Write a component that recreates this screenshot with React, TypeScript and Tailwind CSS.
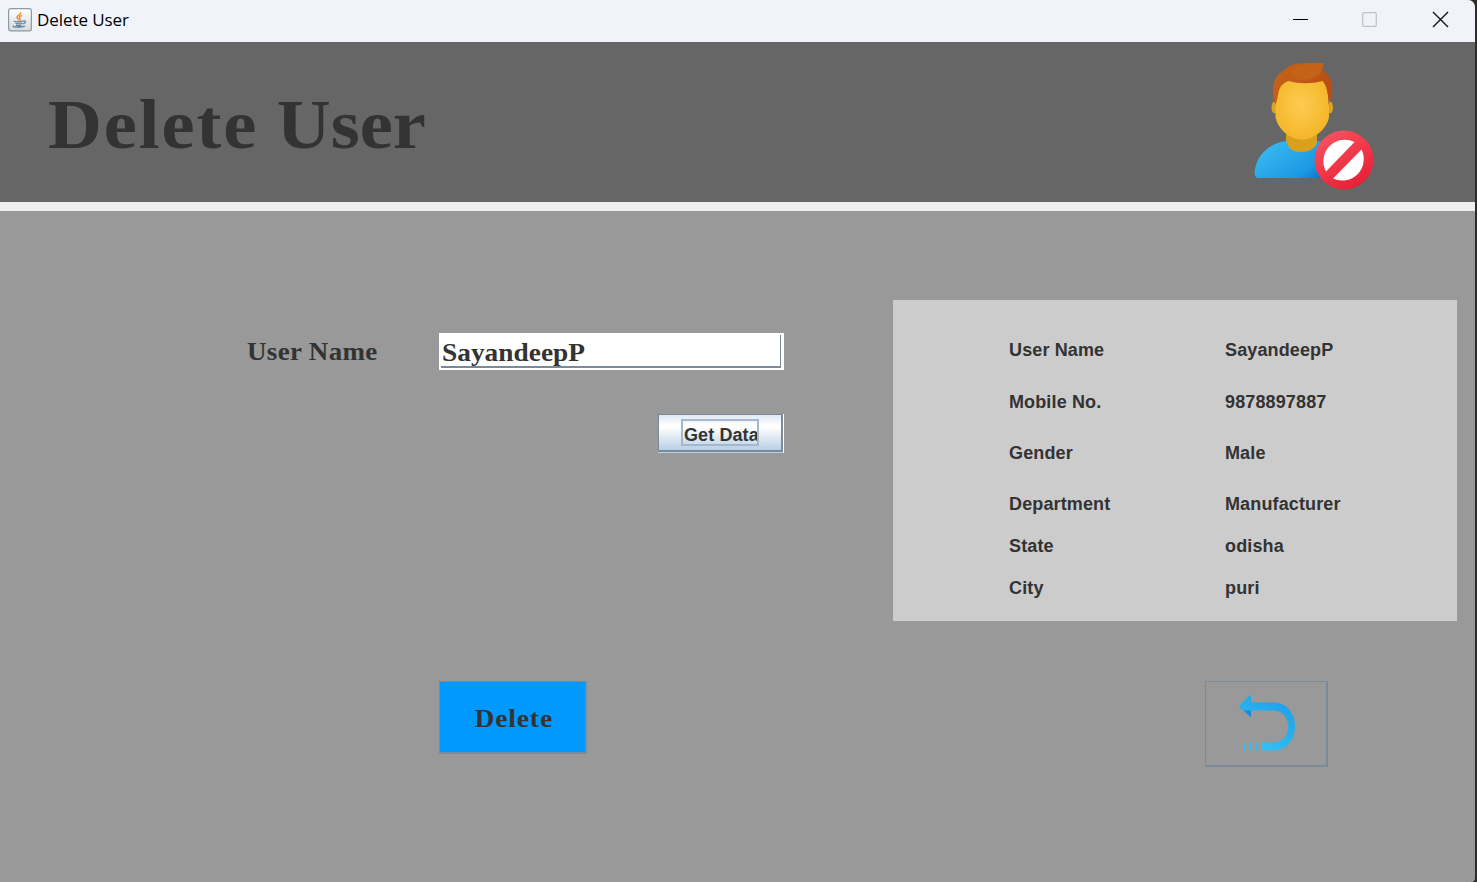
import React from "react";

const rows = [
  { label: "User Name", value: "SayandeepP", height: "h-[52px]" },
  { label: "Mobile No.", value: "9878897887", height: "h-[51px]" },
  { label: "Gender", value: "Male", height: "h-[51px]" },
  { label: "Department", value: "Manufacturer", height: "h-[42px]" },
  { label: "State", value: "odisha", height: "h-[42px]" },
  { label: "City", value: "puri", height: "h-[22px]" },
];

function JavaIcon() {
  return (
    <svg width="24" height="24" viewBox="0 0 24 24" fill="none">
      <defs>
        <linearGradient id="javaBg" x1="0" y1="0" x2="0" y2="1">
          <stop offset="0" stopColor="#ffffff" />
          <stop offset="1" stopColor="#d5dadd" />
        </linearGradient>
      </defs>
      <rect x="0.6" y="0.6" width="22.8" height="22.2" rx="2" fill="url(#javaBg)" stroke="#8a9aa6" strokeWidth="1.2" />
      <path d="M12.500 4c1 3-4 3.500-3.500 5.500.2 1 1.500 1.500 1.600 3M14 7.500c-3 1-3.200 2-2 3.200.6.8 0 1.500-.6 2" stroke="#f08a2c" strokeWidth="1.400" />
      <path d="M6.500 13c-2 .8 6 1.300 9 0M7.500 15.200c1 1 5 1 7 0M8 17c1.500.9 4 .8 5.500 0M15.500 13c3-.8 2.500 2.300-.5 3M6 17.700c-4 1.500 7 2.300 11 .3" stroke="#557f9d" strokeWidth="1.200" />
    </svg>
  );
}

function BlockedUser() {
  return (
    <svg width="150" height="150" viewBox="0 0 150 150">
      <defs>
        <radialGradient id="face" cx="0.48" cy="0.45" r="0.6">
          <stop offset="0" stopColor="#fecb51" />
          <stop offset="1" stopColor="#f3b526" />
        </radialGradient>
        <linearGradient id="shirt" x1="0" y1="0.2" x2="1" y2="0.9">
          <stop offset="0" stopColor="#3abcf0" />
          <stop offset="0.75" stopColor="#1b98e3" />
          <stop offset="1" stopColor="#0b73c4" />
        </linearGradient>
        <linearGradient id="hair" x1="0" y1="0" x2="1" y2="0.4">
          <stop offset="0" stopColor="#c8651a" />
          <stop offset="1" stopColor="#b94e14" />
        </linearGradient>
        <linearGradient id="ban" x1="0.2" y1="0" x2="0.8" y2="1">
          <stop offset="0" stopColor="#f85361" />
          <stop offset="1" stopColor="#e71c32" />
        </linearGradient>
      </defs>
      <path d="M19 128q-4.500 0-4.500-5c1-17 14.500-30 31.500-32h32c6 1 10 4 10 10v27z" fill="url(#shirt)" />
      <path d="M46 80h31v11c0 14-29 14-29 3l-2-3z" fill="#d8a01c" />
      <ellipse cx="34.500" cy="57.500" rx="3" ry="6" fill="#dca323" />
      <ellipse cx="90" cy="57.500" rx="3" ry="6" fill="#dca323" />
      <path d="M35.500 50 38 33C46 24 79 24 86 33l3 17v17C87 79 74 89.500 62 89.500S37.500 79 35.500 67z" fill="url(#face)" />
      <path d="M35.500 55C31 42 32 28 42 22c6-6 12-9 22-9h19.500l-1 8c8 3 11 14 9.500 23l-3.500 11c0-11-2-20-6-24-11 3-23 3-34 0-9 3-10 10-11 17z" fill="url(#hair)" />
      <path d="M49 21c6-5 14-8 24-8h10c1 12-10 17-20 17-7 0-12-4-14-9z" fill="#c46217" />
      <circle cx="104" cy="110" r="29.500" fill="url(#ban)" />
      <path d="M114.500 92A21.500 21.500 0 0 0 86 121.500Z" fill="#fff" />
      <path d="M121.500 99.500A21.500 21.500 0 0 1 93 128.500Z" fill="#fff" />
    </svg>
  );
}

function BackArrow() {
  return (
    <svg width="57" height="56" viewBox="0 0 57 56">
      <defs>
        <linearGradient id="arrow" x1="0.8" y1="0.2" x2="0.3" y2="1">
          <stop offset="0" stopColor="#20a3e8" />
          <stop offset="1" stopColor="#36c2f3" />
        </linearGradient>
      </defs>
      <path d="M0 11 4 15l8 7.500V13z" fill="#168ddb" />
      <path d="M0 11 10 0.500h2V7.500H35C63 8 63 55 35 55.500H22V47.500H35C54 46 54 17 35 15.500H4z" fill="url(#arrow)" />
      <path d="M4 48.500h3v6.500H4zM10 47.500h3v8h-3zM16 47.500h3v8h-3z" fill="#32bcf1" />
    </svg>
  );
}

export default function App() {
  return (
    <div className="h-[882px] w-[1477px] overflow-hidden bg-[#2c2c2c] pr-[2px] font-['Liberation_Sans',sans-serif] text-[#333333]">
      <div className="flex h-full flex-col overflow-hidden rounded-tr-[7px] rounded-br-[4px] bg-[#999999]">
        <div className="flex h-[42px] shrink-0 items-start justify-between bg-[#f0f3fa] pl-2">
          <div className="flex items-center gap-[5px] pt-[7px]">
            <JavaIcon />
            <span className="pt-px font-['Open_Sans',sans-serif] text-[17px] leading-6 tracking-[-0.07px] text-black">Delete User</span>
          </div>
          <svg width="184" height="40" viewBox="0 0 184 40" fill="none">
            <path d="M2 19.500h15" stroke="#000" />
            <rect x="71.700" y="12.700" width="13.600" height="13.600" rx="1" stroke="#c1c3c8" strokeWidth="1.300" />
            <path d="m142 12 15 15m0-15-15 15" stroke="#111" strokeWidth="1.400" />
          </svg>
        </div>

        <header className="flex h-[169px] shrink-0 items-start justify-between border-b-[9px] border-[#eeeeee] bg-[#666666] pt-[8px] pr-[85px] pl-[48px]">
          <h1 className="origin-left scale-x-[1.065] pt-[35px] font-['Liberation_Serif',serif] text-[70px] leading-[80px] font-bold whitespace-nowrap">
            <span className="tracking-[1.8px]">Delete</span> User
          </h1>
          <BlockedUser />
        </header>

        <main className="flex flex-1 flex-col pt-[89px]">
          <div className="flex h-[381px]">
            <section className="flex w-[893px] flex-col pt-[33px] pl-[247px]">
              <div className="flex h-[37px] font-['Liberation_Serif',serif] text-[25px] leading-[37px] font-bold">
                <label htmlFor="username" className="w-[192px]">
                  <span className="inline-block origin-left scale-x-[1.08] tracking-[0.3px]">User Name</span>
                </label>
                <div className="h-[37px] w-[345px] bg-white p-[2px] pr-[3px]">
                  <div className="h-[33px] w-full overflow-hidden border-r border-b-2 border-[#7a8a99] pl-px">
                    <input
                      id="username"
                      defaultValue="SayandeepP"
                      className="block h-[35px] w-[300px] origin-left scale-x-[1.095] bg-transparent outline-none"
                    />
                  </div>
                </div>
              </div>
              <button className="mt-[44px] ml-[411px] h-[39px] w-[126px] border-r border-b border-r-white border-b-[#b8cfe5] text-[18px] font-bold">
                <span className="flex h-full w-full border border-r-2 border-b-2 border-[#7a8a99] bg-[linear-gradient(#dde8f3,#ffffff_30%,#ffffff_35%,#b8cfe5)] pt-[4px] pl-[22px]">
                  <span className="block h-[27px] w-[78px] overflow-hidden border-2 border-[#a3b8cc] pl-px text-left leading-[28px] tracking-[0.1px] whitespace-nowrap">Get Data</span>
                </span>
              </button>
            </section>
            <section className="h-[321px] w-[564px] bg-[#cccccc] pt-[39px] pl-[116px] text-[18px] leading-[22px] font-bold tracking-[0.13px]">
              {rows.map((row) => (
                <div key={row.label} className={`flex ${row.height}`}>
                  <span className="w-[216px]">{row.label}</span>
                  <span>{row.value}</span>
                </div>
              ))}
            </section>
          </div>
          <div className="flex items-start justify-between pr-[147px] pl-[439px]">
            <button className="h-[73px] w-[148px] border border-r-2 border-b-2 border-[#7a8a99] bg-[#0099ff] pt-[3px] pl-[2px] font-['Liberation_Serif',serif] text-[25px] font-bold tracking-[0.8px]">
              <span className="inline-block scale-x-[1.1]">Delete</span>
            </button>
            <button aria-label="Back" className="flex h-[86px] w-[123px] items-start border border-r-2 border-b-2 border-[#7a8a99] pt-[12.5px] pl-[33px]">
              <BackArrow />
            </button>
          </div>
        </main>
      </div>
    </div>
  );
}
